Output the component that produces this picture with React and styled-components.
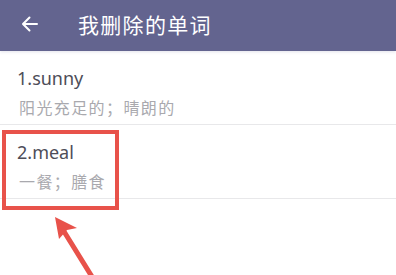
import React from "react";
import styled, { createGlobalStyle } from "styled-components";

const GlobalStyle = createGlobalStyle`
  html, body {
    margin: 0;
    padding: 0;
    background: #ffffff;
  }
  body {
    font-family: "Noto Sans", "Noto Sans CJK SC", sans-serif;
  }
`;

const Page = styled.div`
  position: relative;
  width: 396px;
  height: 275px;
  overflow: hidden;
  background: #ffffff;
`;

const Header = styled.div`
  display: flex;
  align-items: center;
  height: 51px;
  padding-left: 21px;
  background: #63648f;
  box-shadow: 0 1px 3px rgba(99, 100, 143, 0.18);
`;

const BackButton = styled.div`
  display: flex;
  align-items: center;
  width: 18px;
  height: 18px;
  margin-top: -4px;
`;

const Title = styled.div`
  margin-left: 39px;
  margin-top: -4px;
  color: #ffffff;
  font-family: "Noto Sans CJK SC", sans-serif;
  font-size: 21px;
  letter-spacing: 1.3px;
`;

const List = styled.div`
  display: flex;
  flex-direction: column;
`;

const Row = styled.div`
  display: flex;
  flex-direction: column;
  height: 74px;
  padding-left: 17px;
  border-bottom: 1px solid #e8e8ea;
  box-sizing: border-box;
`;

const Word = styled.div`
  margin-top: 15px;
  color: #4d4d58;
  font-family: "Noto Sans", sans-serif;
  font-size: 18px;
  line-height: 24px;
`;

const Meaning = styled.div`
  margin-top: 6px;
  margin-left: 2px;
  color: #a9a9ae;
  font-family: "Noto Sans CJK SC", sans-serif;
  font-size: 16px;
  letter-spacing: 1.4px;
  line-height: 22px;
`;

const Highlight = styled.div`
  position: absolute;
  left: 2px;
  top: 130px;
  width: 117px;
  height: 80px;
  border: 4px solid #e8524a;
  box-sizing: border-box;
`;

const Pointer = styled.svg`
  position: absolute;
  left: 0;
  top: 0;
`;

const words = [
  { word: "sunny", meaning: "阳光充足的；晴朗的" },
  { word: "meal", meaning: "一餐；膳食" },
];

export default function App() {
  return (
    <Page>
      <GlobalStyle />
      <Header>
        <BackButton>
          <svg width="18" height="18" viewBox="0 0 18 18">
            <path
              d="M16 9H2.5M8.5 2.5L2 9l6.5 6.5"
              fill="none"
              stroke="#ffffff"
              strokeWidth="2"
              strokeLinecap="round"
              strokeLinejoin="round"
            />
          </svg>
        </BackButton>
        <Title>我删除的单词</Title>
      </Header>
      <List>
        {words.map((w, i) => (
          <Row key={w.word}>
            <Word>
              {i + 1}.{w.word}
            </Word>
            <Meaning>{w.meaning}</Meaning>
          </Row>
        ))}
      </List>
      <Highlight />
      <Pointer width="396" height="275" viewBox="0 0 396 275">
        <path
          d="M60 225L94 280"
          stroke="#e8524a"
          strokeWidth="5"
          strokeLinecap="round"
        />
        <path d="M55 217L77 228L67 230L59 239Z" fill="#e8524a" />
      </Pointer>
    </Page>
  );
}
